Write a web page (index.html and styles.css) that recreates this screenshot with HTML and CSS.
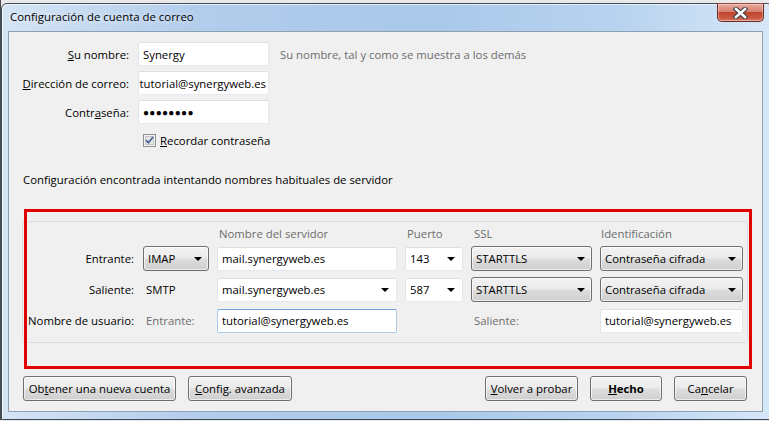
FILE: index.html
```html
<!DOCTYPE html>
<html lang="es">
<head>
<meta charset="utf-8">
<title>Configuración de cuenta de correo</title>
<link rel="stylesheet" href="styles.css">
</head>
<body>
<div class="desktop">
  <div class="window">
    <div class="titlebar">
      <span class="title">Configuración de cuenta de correo</span>
      <div class="close">
        <svg width="17" height="12" viewBox="0 0 17 12">
          <path d="M4 2 L13 10 M13 2 L4 10" stroke="#3b3f47" stroke-width="4.6" stroke-linecap="square" fill="none"/>
          <path d="M4 2 L13 10 M13 2 L4 10" stroke="#ffffff" stroke-width="2.6" stroke-linecap="square" fill="none"/>
        </svg>
      </div>
    </div>
    <div class="content">
      <div class="identity">
        <label class="lbl"><u>S</u>u nombre:</label>
        <div class="textbox">Synergy</div>
        <span class="hint">Su nombre, tal y como se muestra a los demás</span>

        <label class="lbl"><u>D</u>irección de correo:</label>
        <div class="textbox scrolled"><span>tutorial@synergyweb.es</span></div>
        <span></span>

        <label class="lbl">Contr<u>a</u>seña:</label>
        <div class="textbox password">●●●●●●●●</div>
        <span></span>

        <span></span>
        <div class="remember">
          <span class="checkbox">
            <svg width="13" height="13" viewBox="0 0 13 13">
              <rect x="0.5" y="0.5" width="12" height="12" fill="#f4f4f4" stroke="#8e8f8f"/>
              <rect x="2.5" y="2.5" width="8" height="8" fill="#e6e6e6" stroke="#c0c4c8"/>
              <path d="M3 6.2 L5.4 8.8 L10 3" stroke="#4a5f97" stroke-width="1.7" fill="none"/>
            </svg>
          </span>
          <span class="remember-text"><u>R</u>ecordar contraseña</span>
        </div>
        <span></span>
      </div>

      <p class="status">Configuración encontrada intentando nombres habituales de servidor</p>

      <div class="group">
        <div class="servers">
          <span></span>
          <span></span>
          <span class="head">Nombre del servidor</span>
          <span class="head">Puerto</span>
          <span class="head ssl">SSL</span>
          <span class="head ident">Identificación</span>

          <span class="rowlbl">Entrante:</span>
          <div class="dropdown">IMAP<span class="arrow"></span></div>
          <div class="textbox">mail.synergyweb.es</div>
          <div class="textbox combo">143<span class="arrow"></span></div>
          <div class="dropdown">STARTTLS<span class="arrow"></span></div>
          <div class="dropdown">Contraseña cifrada<span class="arrow"></span></div>

          <span class="rowlbl">Saliente:</span>
          <span class="plain">SMTP</span>
          <div class="textbox combo">mail.synergyweb.es<span class="arrow"></span></div>
          <div class="textbox combo">587<span class="arrow"></span></div>
          <div class="dropdown">STARTTLS<span class="arrow"></span></div>
          <div class="dropdown">Contraseña cifrada<span class="arrow"></span></div>

          <span class="rowlbl">Nombre de usuario:</span>
          <span class="plain muted">Entrante:</span>
          <div class="textbox focused">tutorial@synergyweb.es</div>
          <span></span>
          <span class="plain muted">Saliente:</span>
          <div class="textbox">tutorial@synergyweb.es</div>
        </div>
      </div>

      <div class="buttons">
        <div class="btngroup">
          <button class="btn w-obtener">Ob<u>t</u>ener una nueva cuenta</button>
          <button class="btn w-config"><u>C</u>onfig. avanzada</button>
        </div>
        <div class="btngroup">
          <button class="btn w-volver"><u>V</u>olver a probar</button>
          <button class="btn w-hecho default"><u>H</u>echo</button>
          <button class="btn w-cancelar">Ca<u>n</u>celar</button>
        </div>
      </div>

      <div class="highlight"></div>
    </div>
  </div>
</div>
</body>
</html>
```

FILE: styles.css
```css
* { box-sizing: border-box; }

html, body {
  margin: 0;
  padding: 0;
  width: 769px;
  height: 421px;
  overflow: hidden;
}

body {
  background: #e6e6e6;
  font-family: "Open Sans", "Noto Sans", sans-serif;
  font-size: 11.35px;
  color: #000;
}

.desktop {
  padding: 3px 0 0 1px;
  background: linear-gradient(to right, #4a4a4a 0, #4a4a4a 1px, #e9e9e9 1px);
}

.window {
  width: 772px;
  height: 417px;
  border: 1px solid #3c4a5c;
  border-radius: 6px 6px 0 0;
  background: linear-gradient(to right, #d4e4f5 0%, #b3cdec 25%, #a9c8ea 55%, #b8d3ef 80%, #d6e7f8 100%);
  padding: 0 0 0 6px;
  box-shadow: inset 1px 1px 0 rgba(255,255,255,0.7);
}

.titlebar {
  height: 27px;
  display: flex;
  align-items: flex-start;
  justify-content: space-between;
  padding-right: 8px;
}

.title {
  font-size: 11.4px;
  padding: 5px 0 0 2px;
  line-height: 16px;
  color: #000;
  text-shadow: 0 0 6px rgba(255,255,255,0.9);
}

.close {
  width: 47px;
  height: 19px;
  margin-top: -1px;
  border: 1px solid #6c2a22;
  border-top-color: #8c4a40;
  border-radius: 0 0 5px 5px;
  background: linear-gradient(#e9a99c 0%, #d7806f 45%, #c24530 50%, #cb5a43 85%, #db8a72 100%);
  box-shadow: inset 0 0 0 1px rgba(255,255,255,0.35);
  display: flex;
  align-items: center;
  justify-content: center;
}

.close svg { display: block; }

.content {
  position: relative;
  width: 755px;
  height: 381px;
  background: #f0f0f0;
  border: 1px solid #8e9fb1;
  padding: 10px 0 0 0;
}

/* identity block */
.identity {
  display: grid;
  grid-template-columns: 120px 131px auto;
  grid-template-rows: 24px 24px 24px 22px;
  column-gap: 9px;
  row-gap: 5px;
  align-items: center;
}

.identity .hint { margin-left: 2px; }

.lbl {
  text-align: right;
  white-space: nowrap;
}

.hint { color: #6d6d6d; white-space: nowrap; }

.textbox {
  height: 24px;
  background: #fff;
  border: 1px solid;
  border-color: #dcdfe3 #e3e7eb #e6e9ee #e1e4e8;
  border-radius: 2px;
  padding: 0 4px;
  display: flex;
  align-items: center;
  white-space: nowrap;
  overflow: hidden;
  position: relative;
}

.textbox.scrolled {
  justify-content: flex-end;
  padding: 0 2px 0 0;
}

.textbox.password {
  font-size: 10px;
  letter-spacing: 0.3px;
}

.textbox.focused {
  border-color: #6fa6dc #a8cbee #a8cbee #a8cbee;
}

.remember {
  display: flex;
  align-items: center;
  gap: 4px;
  padding-left: 5px;
  white-space: nowrap;
}

.remember-text { flex: none; }

.checkbox { display: flex; flex: none; }
.checkbox svg { display: block; }

.status {
  margin: 21px 0 0 14px;
  line-height: 16px;
}

/* server group */
.group {
  margin: 33px 0 0 13px;
  width: 726px;
  border: 1px solid #d5dfe5;
  border-radius: 3px;
  padding-bottom: 9px;
}

.servers {
  display: grid;
  grid-template-columns: 112px 66px 180px 58px 121px 143px;
  grid-template-rows: 18px 25px 25px 25px;
  column-gap: 8px;
  row-gap: 6px;
  align-items: center;
}

.head {
  color: #6d6d6d;
  padding-left: 2px;
  white-space: nowrap;
  align-self: end;
  line-height: 14px;
  margin-bottom: -1px;
}
.head.ssl { padding-left: 3px; }
.head.ident { padding-left: 1px; }

.rowlbl {
  text-align: right;
  padding-right: 1px;
  white-space: nowrap;
}

.plain {
  padding-left: 3px;
  white-space: nowrap;
}
.muted { color: #6d6d6d; }

.dropdown {
  height: 25px;
  border: 1px solid #707070;
  border-radius: 3px;
  background: linear-gradient(#f2f2f2 0%, #ebebeb 48%, #dddddd 52%, #cfcfcf 100%);
  box-shadow: inset 0 0 0 1px rgba(255,255,255,0.6);
  padding: 0 4px;
  display: flex;
  align-items: center;
  justify-content: space-between;
  white-space: nowrap;
}

.servers .textbox { height: 24px; }

.combo { justify-content: space-between; }

.arrow {
  width: 0;
  height: 0;
  border-left: 4px solid transparent;
  border-right: 4px solid transparent;
  border-top: 4px solid #000;
  margin-right: 2px;
  flex: none;
}

.combo .arrow { margin-right: 3px; }

/* bottom buttons */
.buttons {
  display: flex;
  justify-content: space-between;
  margin: 33px 15px 0 14px;
}

.btngroup {
  display: flex;
  gap: 12px;
}

.btn {
  height: 25px;
  font: inherit;
  color: #000;
  border: 1px solid #707070;
  border-radius: 3px;
  background: linear-gradient(#f2f2f2 0%, #ebebeb 48%, #dddddd 52%, #cfcfcf 100%);
  box-shadow: inset 0 0 0 1px rgba(255,255,255,0.6);
  padding: 0;
  text-align: center;
}

.btn.default { font-weight: bold; }

.w-obtener { width: 153px; }
.w-config { width: 104px; }
.w-volver { width: 93px; }
.w-hecho { width: 72px; }
.w-cancelar { width: 73px; }

/* annotation overlay */
.highlight {
  position: absolute;
  left: 15px;
  top: 177px;
  width: 728px;
  height: 160px;
  border: 3px solid #e00000;
  pointer-events: none;
}
```
